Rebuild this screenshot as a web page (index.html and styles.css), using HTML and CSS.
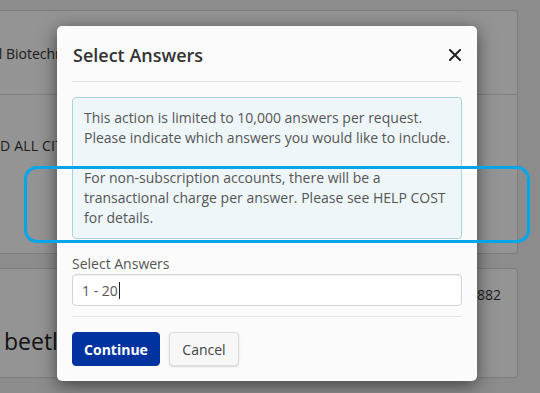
FILE: index.html
```html
<!DOCTYPE html>
<html lang="en">
<head>
<meta charset="utf-8">
<title>Select Answers</title>
<link rel="stylesheet" href="styles.css">
</head>
<body>
<div class="page">
  <div class="card card-top">
    <div class="card-section sec-journal">
      <span class="journal">al Biotechnology</span>
    </div>
    <div class="card-section sec-actions">
      <span class="action-link">D ALL CITATIONS</span>
    </div>
  </div>
  <div class="card card-result">
    <div class="result-meta"><span class="result-num">882</span></div>
    <div class="result-title">beetles</div>
  </div>
</div>

<div class="backdrop"></div>

<div class="modal" role="dialog" aria-labelledby="modal-title">
  <div class="modal-header">
    <h2 class="modal-title" id="modal-title">Select Answers</h2>
    <button class="close-btn" aria-label="Close">
      <svg width="12" height="12" viewBox="0 0 12 12" aria-hidden="true">
        <path d="M1 1 L11 11 M11 1 L1 11" stroke="#222" stroke-width="2" stroke-linecap="square" fill="none"/>
      </svg>
    </button>
  </div>
  <div class="modal-body">
    <div class="info-box">
      <p>This action is limited to 10,000 answers per request. Please indicate which answers you would like to include.</p>
      <p>For non-subscription accounts, there will be a transactional charge per answer. Please see HELP COST for details.</p>
    </div>
    <label class="field-label">Select Answers</label>
    <div class="text-input">1 - 20<span class="caret"></span></div>
  </div>
  <div class="modal-footer">
    <button class="btn btn-primary">Continue</button>
    <button class="btn btn-default">Cancel</button>
  </div>
</div>

<div class="highlight"></div>
</body>
</html>
```

FILE: styles.css
```css
* {
  box-sizing: border-box;
}

html, body {
  margin: 0;
  padding: 0;
}

html {
  overflow: hidden;
}

body {
  width: 540px;
  height: 393px;
  overflow: hidden;
  position: relative;
  background: #f1f1f1;
  font-family: "Open Sans", "Liberation Sans", sans-serif;
  color: #333;
}

/* ---------- background page ---------- */
.page {
  padding-top: 10px;
  padding-right: 22px;
  margin-left: -7px;
  display: flex;
  flex-direction: column;
  gap: 14px;
}

.card {
  background: #fff;
  border: 1px solid #d8d8d8;
  border-radius: 4px;
}

.card-top {
  height: 244px;
  display: flex;
  flex-direction: column;
}

.card-section {
  display: flex;
  align-items: center;
}

.sec-journal {
  height: 84px;
  border-bottom: 1px solid #dcdcdc;
  padding-top: 2px;
}

.journal {
  font-size: 14px;
  color: #333;
  margin-left: -3px;
}

.sec-actions {
  align-items: flex-start;
  padding-top: 41px;
  padding-left: 6px;
}

.action-link {
  font-size: 14px;
  color: #333;
  letter-spacing: 0.2px;
}

.card-result {
  height: 110px;
  padding: 16px 16px 0 10px;
}

.result-meta {
  display: flex;
  justify-content: flex-end;
  height: 24px;
}

.result-num {
  font-size: 14px;
  color: #333;
}

.result-title {
  margin-top: 16px;
  font-size: 23px;
  color: #222;
}

/* ---------- overlay ---------- */
.backdrop {
  position: absolute;
  inset: 0;
  background: rgba(0, 0, 0, 0.42);
}

/* ---------- modal ---------- */
.modal {
  position: absolute;
  left: 57px;
  top: 26px;
  width: 420px;
  background: #fbfbfb;
  border-radius: 5px;
  box-shadow: 0 4px 18px rgba(0, 0, 0, 0.55);
  padding: 0 15px;
}

.modal-header {
  height: 56px;
  display: flex;
  align-items: center;
  justify-content: space-between;
  border-bottom: 1px solid #e3e3e3;
  padding-top: 2px;
}

.modal-title {
  margin: 0;
  font-size: 18px;
  font-weight: 600;
  color: #333;
  padding-left: 1px;
}

.close-btn {
  border: 0;
  background: none;
  padding: 0;
  width: 12px;
  height: 12px;
  display: flex;
  margin-right: 1px;
}

.modal-body {
  padding-top: 15px;
}

.info-box {
  background: #eef6fa;
  border: 1px solid #a6d3e8;
  border-radius: 4px;
  padding: 10px 11px;
  font-size: 14px;
  line-height: 20px;
  color: #555;
}

.info-box p {
  margin: 0;
}

.info-box p + p {
  margin-top: 20px;
}

.field-label {
  display: block;
  margin-top: 15px;
  font-size: 14px;
  line-height: 20px;
  color: #555;
}

.text-input {
  height: 32px;
  border: 1px solid #d3d3d3;
  border-radius: 4px;
  background: #fff;
  box-shadow: inset 0 1px 1px rgba(0, 0, 0, 0.06);
  padding: 0 9px;
  display: flex;
  align-items: center;
  font-size: 14px;
  color: #555;
}

.caret {
  display: inline-block;
  width: 1px;
  height: 17px;
  background: #222;
  margin-left: 1px;
}

.modal-footer {
  margin-top: 10px;
  border-top: 1px solid #e3e3e3;
  padding: 15px 0 15px;
  display: flex;
  gap: 9px;
}

.btn {
  height: 34px;
  border-radius: 4px;
  font-family: "Open Sans", "Liberation Sans", sans-serif;
  font-size: 14px;
  padding: 0;
  cursor: pointer;
}

.btn-primary {
  background: #0033a0;
  color: #fff;
  border: 1px solid #0033a0;
  font-weight: 700;
  width: 88px;
}

.btn-default {
  background: #f7f7f7;
  color: #444;
  border: 1px solid #dcdcdc;
  box-shadow: 0 1px 2px rgba(0, 0, 0, 0.15);
  width: 70px;
}

/* ---------- annotation highlight ---------- */
.highlight {
  position: absolute;
  left: 24px;
  top: 166px;
  width: 506px;
  height: 77px;
  border: 3px solid #05a6e8;
  border-radius: 13px;
}
```
